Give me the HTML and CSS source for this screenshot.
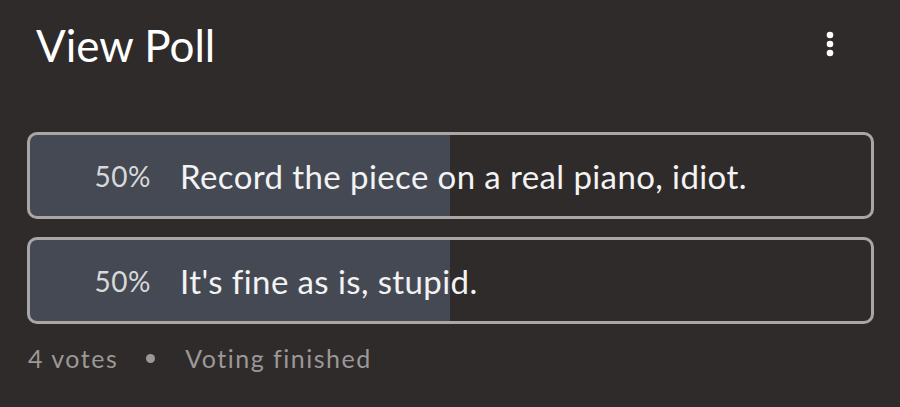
FILE: index.html
```html
<!DOCTYPE html>
<html>
<head>
<meta charset="utf-8">
<link rel="stylesheet" href="styles.css">
</head>
<body>
<div class="poll">
  <div class="header">
    <h1 class="title">View Poll</h1>
    <button class="menu" aria-label="More options">
      <svg width="8" height="26" viewBox="0 0 8 26"><circle cx="4" cy="4" r="3.3" fill="#fff"/><circle cx="4" cy="13" r="3.3" fill="#fff"/><circle cx="4" cy="22" r="3.3" fill="#fff"/></svg>
    </button>
  </div>
  <div class="options">
    <div class="option" style="--pct: 50%">
      <span class="pct">50%</span>
      <span class="label">Record the piece on a real piano, idiot.</span>
    </div>
    <div class="option" style="--pct: 50%">
      <span class="pct">50%</span>
      <span class="label">It's fine as is, stupid.</span>
    </div>
  </div>
  <div class="footer">
    <span>4 votes</span>
    <span class="sep"></span>
    <span>Voting finished</span>
  </div>
</div>
</body>
</html>
```
FILE: styles.css
```css
html, body {
  margin: 0;
  padding: 0;
  background: #2f2b2a;
}
body {
  width: 900px;
  height: 407px;
  overflow: hidden;
  font-family: "Lato", "Open Sans", sans-serif;
}
.poll {
  display: flex;
  flex-direction: column;
}
.header {
  display: flex;
  justify-content: space-between;
  align-items: flex-start;
  padding: 0 66px 0 36px;
  height: 132px;
}
.title {
  margin: 0;
  padding-top: 18px;
  font-size: 44px;
  font-weight: 400;
  line-height: 54px;
  color: #ffffff;
}
.menu {
  margin-top: 31px;
  padding: 0;
  border: 0;
  background: none;
  width: 8px;
  height: 26px;
  display: block;
}
.menu svg { display: block; }
.options {
  display: flex;
  flex-direction: column;
  gap: 18px;
  padding: 0 26px 0 27px;
}
.option {
  height: 87px;
  box-sizing: border-box;
  border: 3px solid #a9a6a4;
  border-radius: 10px;
  background: linear-gradient(to right, #454954 var(--pct), transparent var(--pct));
  display: flex;
  align-items: center;
}
.pct {
  width: 121px;
  text-align: right;
  font-size: 28px;
  color: #d8d8d8;
  letter-spacing: 0.5px;
}
.label {
  margin-left: 29px;
  font-size: 33px;
  color: #f3f3f3;
  letter-spacing: 0.4px;
}
.footer {
  display: flex;
  align-items: center;
  padding: 19px 0 0 28px;
  font-size: 25px;
  color: #9b9897;
  letter-spacing: 1.5px;
}
.sep {
  width: 9px;
  height: 9px;
  border-radius: 50%;
  background: #9b9897;
  margin: 0 30px 0 28px;
}
```
